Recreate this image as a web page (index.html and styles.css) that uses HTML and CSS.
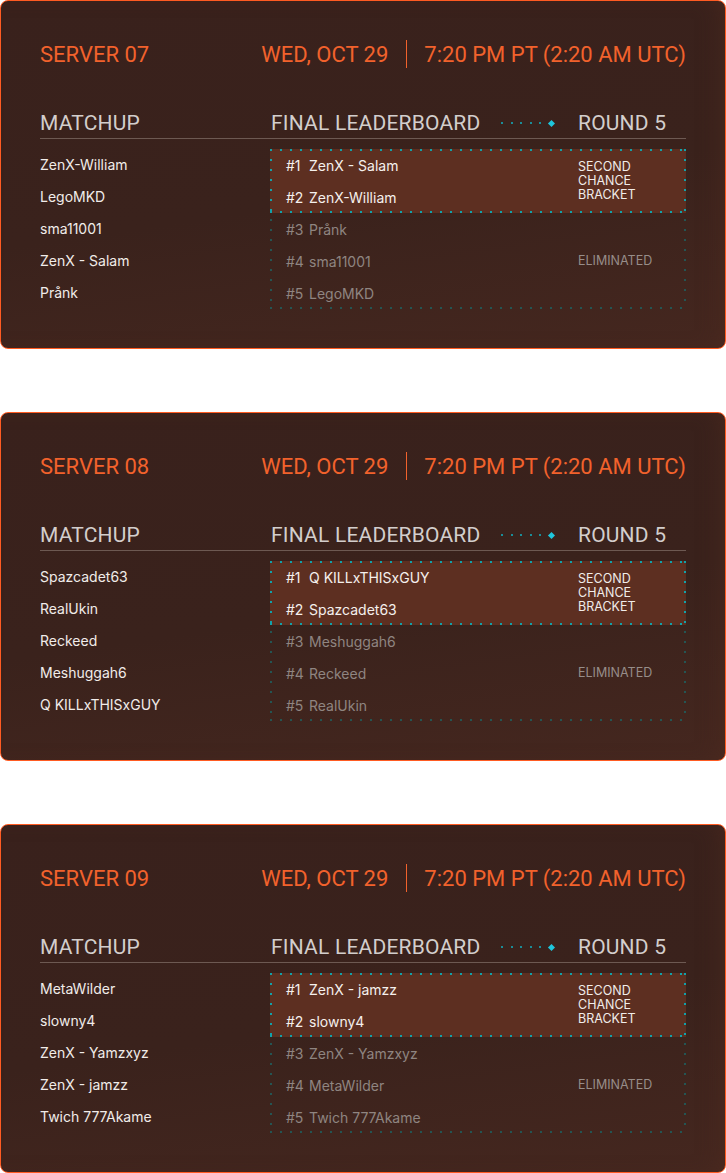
FILE: index.html
```html
<!DOCTYPE html>
<html>
<head>
<meta charset="utf-8">
<link rel="stylesheet" href="styles.css">
</head>
<body>
<div class="card">
  <div class="top"><span class="server">SERVER 07</span><span>WED, OCT 29</span><span class="vline"></span><span>7:20 PM PT (2:20 AM UTC)</span></div>
  <div class="heads"><span>MATCHUP</span><span class="lbh">FINAL LEADERBOARD<span class="dots"><i></i><i></i><i></i><i></i><i></i><b></b></span></span><span>ROUND 5</span></div>
  <div class="body">
    <ul class="matchup"><li>ZenX-William</li><li>LegoMKD</li><li>sma11001</li><li>ZenX - Salam</li><li>Prånk</li></ul>
    <div class="board">
      <div class="top2">
        <div class="row"><span class="rk">#1</span>ZenX - Salam</div>
        <div class="row"><span class="rk">#2</span>ZenX-William</div>
        <div class="status s2">SECOND<br>CHANCE<br>BRACKET</div>
      </div>
      <div class="rest">
        <div class="row"><span class="rk">#3</span>Prånk</div><div class="status"></div>
        <div class="row"><span class="rk">#4</span>sma11001</div><div class="status">ELIMINATED</div>
        <div class="row"><span class="rk">#5</span>LegoMKD</div><div class="status"></div>
      </div>
    </div>
  </div>
</div>
<div class="card">
  <div class="top"><span class="server">SERVER 08</span><span>WED, OCT 29</span><span class="vline"></span><span>7:20 PM PT (2:20 AM UTC)</span></div>
  <div class="heads"><span>MATCHUP</span><span class="lbh">FINAL LEADERBOARD<span class="dots"><i></i><i></i><i></i><i></i><i></i><b></b></span></span><span>ROUND 5</span></div>
  <div class="body">
    <ul class="matchup"><li>Spazcadet63</li><li>RealUkin</li><li>Reckeed</li><li>Meshuggah6</li><li>Q KILLxTHISxGUY</li></ul>
    <div class="board">
      <div class="top2">
        <div class="row"><span class="rk">#1</span>Q KILLxTHISxGUY</div>
        <div class="row"><span class="rk">#2</span>Spazcadet63</div>
        <div class="status s2">SECOND<br>CHANCE<br>BRACKET</div>
      </div>
      <div class="rest">
        <div class="row"><span class="rk">#3</span>Meshuggah6</div><div class="status"></div>
        <div class="row"><span class="rk">#4</span>Reckeed</div><div class="status">ELIMINATED</div>
        <div class="row"><span class="rk">#5</span>RealUkin</div><div class="status"></div>
      </div>
    </div>
  </div>
</div>
<div class="card">
  <div class="top"><span class="server">SERVER 09</span><span>WED, OCT 29</span><span class="vline"></span><span>7:20 PM PT (2:20 AM UTC)</span></div>
  <div class="heads"><span>MATCHUP</span><span class="lbh">FINAL LEADERBOARD<span class="dots"><i></i><i></i><i></i><i></i><i></i><b></b></span></span><span>ROUND 5</span></div>
  <div class="body">
    <ul class="matchup"><li>MetaWilder</li><li>slowny4</li><li>ZenX - Yamzxyz</li><li>ZenX - jamzz</li><li>Twich 777Akame</li></ul>
    <div class="board">
      <div class="top2">
        <div class="row"><span class="rk">#1</span>ZenX - jamzz</div>
        <div class="row"><span class="rk">#2</span>slowny4</div>
        <div class="status s2">SECOND<br>CHANCE<br>BRACKET</div>
      </div>
      <div class="rest">
        <div class="row"><span class="rk">#3</span>ZenX - Yamzxyz</div><div class="status"></div>
        <div class="row"><span class="rk">#4</span>MetaWilder</div><div class="status">ELIMINATED</div>
        <div class="row"><span class="rk">#5</span>Twich 777Akame</div><div class="status"></div>
      </div>
    </div>
  </div>
</div>
</body>
</html>
```
FILE: styles.css
```css
* { box-sizing: border-box; margin: 0; padding: 0; }
body { margin: 0; background: #fff; font-family: Inter, "Liberation Sans", sans-serif; }
.card {
  height: 349px;
  margin-bottom: 63px;
  border: 1px solid #ff5b22;
  border-radius: 8px;
  background: linear-gradient(172deg, #39211c 0%, #3a221c 55%, #45271f 100%);
  box-shadow: inset -14px 0 24px -12px rgba(80, 44, 32, 0.6);
  padding: 39px 39px 0;
}
.card:last-child { margin-bottom: 0; }
.top {
  display: flex;
  align-items: center;
  height: 28px;
  font-family: Roboto, sans-serif;
  font-size: 22px;
  color: #f2622c;
}
.server { flex: 1; }
.vline { width: 1px; align-self: stretch; background: #f2622c; margin: 0 17px 0 18px; }
.heads {
  display: grid;
  grid-template-columns: 230px 308px 1fr;
  margin-top: 40px;
  line-height: 30px;
  height: 31px;
  border-bottom: 1px solid #6d5952;
  font-family: Roboto, sans-serif;
  font-size: 21px;
  letter-spacing: 0.2px;
  color: #d3cecc;
  white-space: nowrap;
}
.lbh { display: flex; align-items: center; padding-left: 1px; }
.dots { margin-left: auto; margin-right: 24px; display: flex; align-items: center; gap: 7.6px; }
.dots i { width: 2px; height: 2px; background: #1b8d98; }
.dots b { width: 5px; height: 5px; background: #1fc6dc; transform: rotate(45deg); }
.body { display: grid; grid-template-columns: 230px 1fr; margin-top: 10px; }
.matchup { list-style: none; }
.matchup li { height: 32px; line-height: 32px; font-size: 14px; color: #f1ece9; }
.board {
  --d: #245553;
  background:
    linear-gradient(to bottom, var(--d) 2px, transparent 2px) left top / 2px 10px repeat-y,
    linear-gradient(to bottom, var(--d) 2px, transparent 2px) right top / 2px 10px repeat-y,
    linear-gradient(to right, var(--d) 2px, transparent 2px) left bottom / 10px 2px repeat-x;
}
.top2 {
  --c: #11a2ab;
  display: grid;
  grid-template-columns: 308px 1fr;
  grid-template-rows: 32px 32px;
  background:
    linear-gradient(to right, var(--c) 2px, transparent 2px) left top / 10px 2px repeat-x,
    linear-gradient(to right, var(--c) 2px, transparent 2px) left bottom / 10px 2px repeat-x,
    linear-gradient(to bottom, var(--c) 2px, transparent 2px) left top / 2px 10px repeat-y,
    linear-gradient(to bottom, var(--c) 2px, transparent 2px) right top / 2px 10px repeat-y,
    #5d2f21;
}
.top2 .row { grid-column: 1; color: #f5f0ed; }
.s2 { grid-column: 2; grid-row: 1 / span 2; align-self: center; color: #f1ece9; }
.rest { display: grid; grid-template-columns: 308px 1fr; grid-auto-rows: 32px; }
.rest .row { color: #8f8581; }
.row { display: flex; align-items: center; padding-left: 16px; font-size: 14px; }
.rk { width: 23px; }
.status { font-size: 12.5px; line-height: 14px; align-self: center; }
.rest .status { color: #978d89; }
```
